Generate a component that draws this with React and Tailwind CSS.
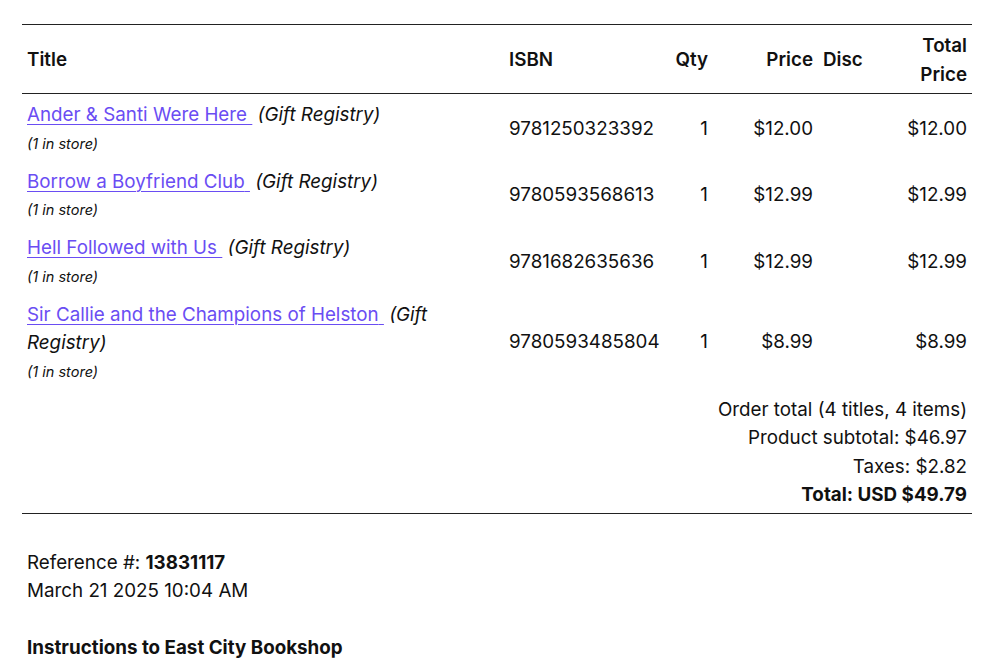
import React from 'react';

const items = [
  { title: 'Ander & Santi Were Here', isbn: '9781250323392', qty: 1, price: '$12.00', total: '$12.00' },
  { title: 'Borrow a Boyfriend Club', isbn: '9780593568613', qty: 1, price: '$12.99', total: '$12.99' },
  { title: 'Hell Followed with Us', isbn: '9781682635636', qty: 1, price: '$12.99', total: '$12.99' },
  { title: 'Sir Callie and the Champions of Helston', isbn: '9780593485804', qty: 1, price: '$8.99', total: '$8.99' },
];

function App() {
  return (
    <div
      className="min-h-screen bg-white px-[22px] pt-[24px] text-[18.8px] leading-[28.5px] text-[#111]"
      style={{ fontFamily: 'Inter, "Noto Sans", sans-serif' }}
    >
      <table className="w-[950px] table-fixed border-collapse">
        <colgroup>
          <col className="w-[482px]" />
          <col className="w-[161px]" />
          <col className="w-[48px]" />
          <col className="w-[105px]" />
          <col className="w-[49px]" />
          <col className="w-[105px]" />
        </colgroup>
        <thead>
          <tr className="border-t-[1.5px] border-b-[1.5px] border-[#222]">
            <th className="px-[5px] pt-[7px] pb-[4px] text-left align-middle font-semibold">Title</th>
            <th className="px-[5px] pt-[7px] pb-[4px] text-left align-middle font-semibold">ISBN</th>
            <th className="px-[5px] pt-[7px] pb-[4px] text-right align-middle font-semibold">Qty</th>
            <th className="px-[5px] pt-[7px] pb-[4px] text-right align-middle font-semibold">Price</th>
            <th className="px-[5px] pt-[7px] pb-[4px] text-right align-middle font-semibold">Disc</th>
            <th className="pl-[20px] pr-[5px] pt-[7px] pb-[4px] text-right align-middle font-semibold">Total Price</th>
          </tr>
        </thead>
        <tbody>
          {items.map((item) => (
            <tr key={item.isbn}>
              <td className="px-[5px] pt-[7px] pb-[3px] align-middle">
                <div>
                  <a href="#" className="text-[#6a4df3] underline decoration-1 underline-offset-[3px]">
                    {item.title}&nbsp;
                  </a>{' '}
                  <span className="italic">(Gift Registry)</span>
                </div>
                <div className="text-[14.5px] leading-[28px] italic">(1 in store)</div>
              </td>
              <td className="px-[5px] pt-[3px] align-middle">{item.isbn}</td>
              <td className="px-[5px] pt-[3px] text-right align-middle">{item.qty}</td>
              <td className="px-[5px] pt-[3px] text-right align-middle">{item.price}</td>
              <td className="px-[5px] pt-[3px] text-right align-middle"></td>
              <td className="px-[5px] pt-[3px] text-right align-middle">{item.total}</td>
            </tr>
          ))}
          <tr className="border-b-[1.5px] border-[#222]">
            <td colSpan={6} className="px-[5px] pt-[7px] pb-[3px] text-right">
              <div>Order total (4 titles, 4 items)</div>
              <div>Product subtotal: $46.97</div>
              <div>Taxes: $2.82</div>
              <div className="font-bold">Total: USD $49.79</div>
            </td>
          </tr>
        </tbody>
      </table>

      <div className="px-[5px] pt-[35px]">
        <div>
          Reference #: <span className="font-bold">13831117</span>
        </div>
        <div>March 21 2025 10:04 AM</div>
        <div className="mt-[28.5px] font-bold">Instructions to East City Bookshop</div>
      </div>
    </div>
  );
}

export default App;
